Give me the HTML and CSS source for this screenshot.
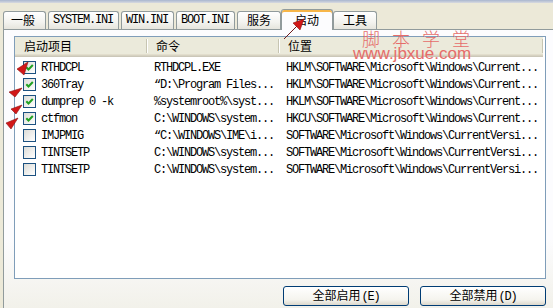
FILE: index.html
```html
<!DOCTYPE html>
<html lang="zh-CN">
  <head>
    <meta charset="UTF-8">
    <meta name="viewport" content="width=device-width, initial-scale=1.0">
    <title>系统配置实用程序</title>
    <link rel="stylesheet" href="styles.css">
  </head>
  <body>
    <div class="frame-top"></div>

    <div class="tabs">
      <div class="tab cn first">一般</div>
      <div class="tab mono">SYSTEM.INI</div>
      <div class="tab mono">WIN.INI</div>
      <div class="tab mono">BOOT.INI</div>
      <div class="tab cn">服务</div>
      <div class="tab cn active">启动</div>
      <div class="tab cn">工具</div>
    </div>

    <div class="page">
      <div class="listview">
        <div class="lv-header">
          <div class="col col-item">启动项目</div>
          <div class="col col-cmd">命令</div>
          <div class="col col-loc">位置</div>
        </div>

        <div class="lv-body mono">
          <div class="row">
            <div class="cell col-item">
              <span class="check"><svg viewBox="0 0 11 11"><path d="M2.3 5.2 4.5 7.5 8.8 3"/></svg></span>RTHDCPL
            </div>
            <div class="cell col-cmd">RTHDCPL.EXE</div>
            <div class="cell col-loc">HKLM\SOFTWARE\Microsoft\Windows\Current...</div>
          </div>
          <div class="row">
            <div class="cell col-item">
              <span class="check"><svg viewBox="0 0 11 11"><path d="M2.3 5.2 4.5 7.5 8.8 3"/></svg></span>360Tray
            </div>
            <div class="cell col-cmd">“D:\Program Files...</div>
            <div class="cell col-loc">HKLM\SOFTWARE\Microsoft\Windows\Current...</div>
          </div>
          <div class="row">
            <div class="cell col-item">
              <span class="check"><svg viewBox="0 0 11 11"><path d="M2.3 5.2 4.5 7.5 8.8 3"/></svg></span>dumprep 0 -k
            </div>
            <div class="cell col-cmd">%systemroot%\syst...</div>
            <div class="cell col-loc">HKLM\SOFTWARE\Microsoft\Windows\Current...</div>
          </div>
          <div class="row">
            <div class="cell col-item">
              <span class="check"><svg viewBox="0 0 11 11"><path d="M2.3 5.2 4.5 7.5 8.8 3"/></svg></span>ctfmon
            </div>
            <div class="cell col-cmd">C:\WINDOWS\system...</div>
            <div class="cell col-loc">HKCU\SOFTWARE\Microsoft\Windows\Current...</div>
          </div>
          <div class="row">
            <div class="cell col-item"><span class="check"></span>IMJPMIG</div>
            <div class="cell col-cmd">“C:\WINDOWS\IME\i...</div>
            <div class="cell col-loc">SOFTWARE\Microsoft\Windows\CurrentVersi...</div>
          </div>
          <div class="row">
            <div class="cell col-item"><span class="check"></span>TINTSETP</div>
            <div class="cell col-cmd">C:\WINDOWS\system...</div>
            <div class="cell col-loc">SOFTWARE\Microsoft\Windows\CurrentVersi...</div>
          </div>
          <div class="row">
            <div class="cell col-item"><span class="check"></span>TINTSETP</div>
            <div class="cell col-cmd">C:\WINDOWS\system...</div>
            <div class="cell col-loc">SOFTWARE\Microsoft\Windows\CurrentVersi...</div>
          </div>
        </div>
      </div>

      <div class="actions">
        <button class="btn">全部启用<span class="mono">(E)</span></button>
        <button class="btn">全部禁用<span class="mono">(D)</span></button>
      </div>
    </div>

    <!-- site stamp -->
    <div class="stamp">
      <div class="stamp-name">脚本学堂</div>
      <div class="stamp-url">www.jbxue.com</div>
    </div>

    <!-- red pointer marks -->
    <svg class="marks" viewBox="0 0 553 308" width="553" height="308">
      <line x1="284" y1="39" x2="297" y2="26" class="mark-line"/>
      <polygon points="304,19 300,30 293,23" class="mark-head"/>
      <polygon points="28,62 24,75 17,69" class="mark-head"/>
      <polygon points="22,88 15,97 9,92" class="mark-head"/>
      <polygon points="22,105 16,114 11,109" class="mark-head"/>
      <polygon points="18,118 11,129 6,123" class="mark-head"/>
    </svg>
  </body>
</html>
```

FILE: styles.css
```css
:root {
  --face: #ece9d8;
  --tab-border: #919b9c;
  --list-border: #7f9db9;
  --header-bg: #ebeadb;
  --check-green: #21a121;
  --mark-red: #d21818;
  --stamp: #e66c6a;
}

html, body {
  margin: 0;
  padding: 0;
}

body {
  position: relative;
  width: 553px;
  height: 308px;
  overflow: hidden;
  background: var(--face);
  color: #000;
  font-family: "Noto Sans CJK SC", sans-serif;
  font-size: 12px;
}

.mono {
  font-family: "Liberation Mono", "Noto Sans CJK SC", monospace;
  font-size: 12px;
  letter-spacing: -1.2px;
}

.frame-top {
  height: 3px;
  background: linear-gradient(#a9b6cf, #d9dbe0);
}

/* tab strip */
.tabs {
  display: flex;
  align-items: flex-end;
  height: 26px;
  padding-left: 3px;
  gap: 2px;
}

.tab {
  box-sizing: border-box;
  height: 18px;
  line-height: 16px;
  padding: 0 5px 0 4px;
  border: 1px solid var(--tab-border);
  border-bottom: none;
  border-radius: 3px 3px 0 0;
  background: linear-gradient(#fff, #f3f3ef 60%, #e6e5dd);
  white-space: nowrap;
}

.tab.cn {
  padding: 0 9px;
}

.tab.cn.first {
  padding: 0 10px 0 7px;
}

.tab.active {
  position: relative;
  z-index: 1;
  height: 21px;
  line-height: 19px;
  margin: 0 -2px -1px;
  padding: 0 13px;
  background: #fcfcfe;
  box-shadow: inset 0 2px 0 #f7b649;
}

/* tab page */
.page {
  box-sizing: border-box;
  height: 280px;
  margin-left: 3px;
  padding: 6px 0 0 10px;
  border: 1px solid var(--tab-border);
  border-right: none;
  background: linear-gradient(#fcfcfe 75%, #f2f1ea);
}

.listview {
  box-sizing: border-box;
  width: 532px;
  height: 243px;
  border: 1px solid var(--list-border);
  background: #fff;
}

.lv-header {
  display: flex;
  align-items: center;
  height: 20px;
  padding-bottom: 2px;
  box-sizing: border-box;
  width: 528px;
  background: var(--header-bg);
  box-shadow: inset 0 -1px 0 #cbc7b8, inset 0 -2px 0 #d6d2c2, inset 0 -3px 0 #e2decd;
}

.lv-header .col {
  box-sizing: border-box;
  height: 14px;
  line-height: 14px;
  padding-left: 9px;
  border-right: 1px solid #c7c5b2;
  box-shadow: 1px 0 0 #fff;
}

.col-item {
  width: 132px;
}

.col-cmd {
  width: 132px;
}

.col-loc {
  width: 264px;
}

.lv-body {
  padding-top: 2px;
}

.row {
  display: flex;
  height: 17px;
  align-items: center;
}

.cell {
  box-sizing: border-box;
  padding-left: 7px;
  white-space: nowrap;
  overflow: hidden;
}

.cell.col-item {
  display: flex;
  align-items: center;
  gap: 5px;
  padding-left: 8px;
}

.check {
  box-sizing: border-box;
  flex: none;
  width: 13px;
  height: 13px;
  border: 1px solid #1c5180;
  background: linear-gradient(135deg, #dcdcd7, #fff);
}

.check svg {
  display: block;
  width: 11px;
  height: 11px;
}

.check path {
  fill: none;
  stroke: var(--check-green);
  stroke-width: 2;
}

/* bottom buttons */
.actions {
  display: flex;
  justify-content: flex-end;
  gap: 11px;
  width: 532px;
  margin-top: 7px;
}

.btn {
  width: 126px;
  height: 20px;
  padding: 0;
  border: 1px solid #003c74;
  border-radius: 3px;
  background: linear-gradient(#fff, #f5f4ee 70%, #dcd8cc);
  color: #000;
  font-family: "Noto Sans CJK SC", sans-serif;
  font-size: 12px;
  line-height: 16px;
}

.btn .mono {
  margin-left: 1px;
}

/* watermark over the list */
.stamp {
  position: absolute;
  z-index: 2;
  left: 353px;
  top: 29px;
  color: var(--stamp);
  pointer-events: none;
}

.stamp-name {
  margin-left: 9px;
  font-size: 18px;
  line-height: 18px;
  font-weight: 300;
  letter-spacing: 12px;
}

.stamp-url {
  margin-top: -1px;
  font-family: "Liberation Sans", sans-serif;
  font-size: 17px;
  line-height: 15px;
}

/* arrows sit above the active tab */
.marks {
  position: absolute;
  z-index: 2;
  left: 0;
  top: 0;
  pointer-events: none;
}

.mark-line {
  stroke: #6b1b1b;
  stroke-width: 1;
}

.mark-head {
  fill: var(--mark-red);
  stroke: #8a1010;
  stroke-width: 0.6;
}
```
